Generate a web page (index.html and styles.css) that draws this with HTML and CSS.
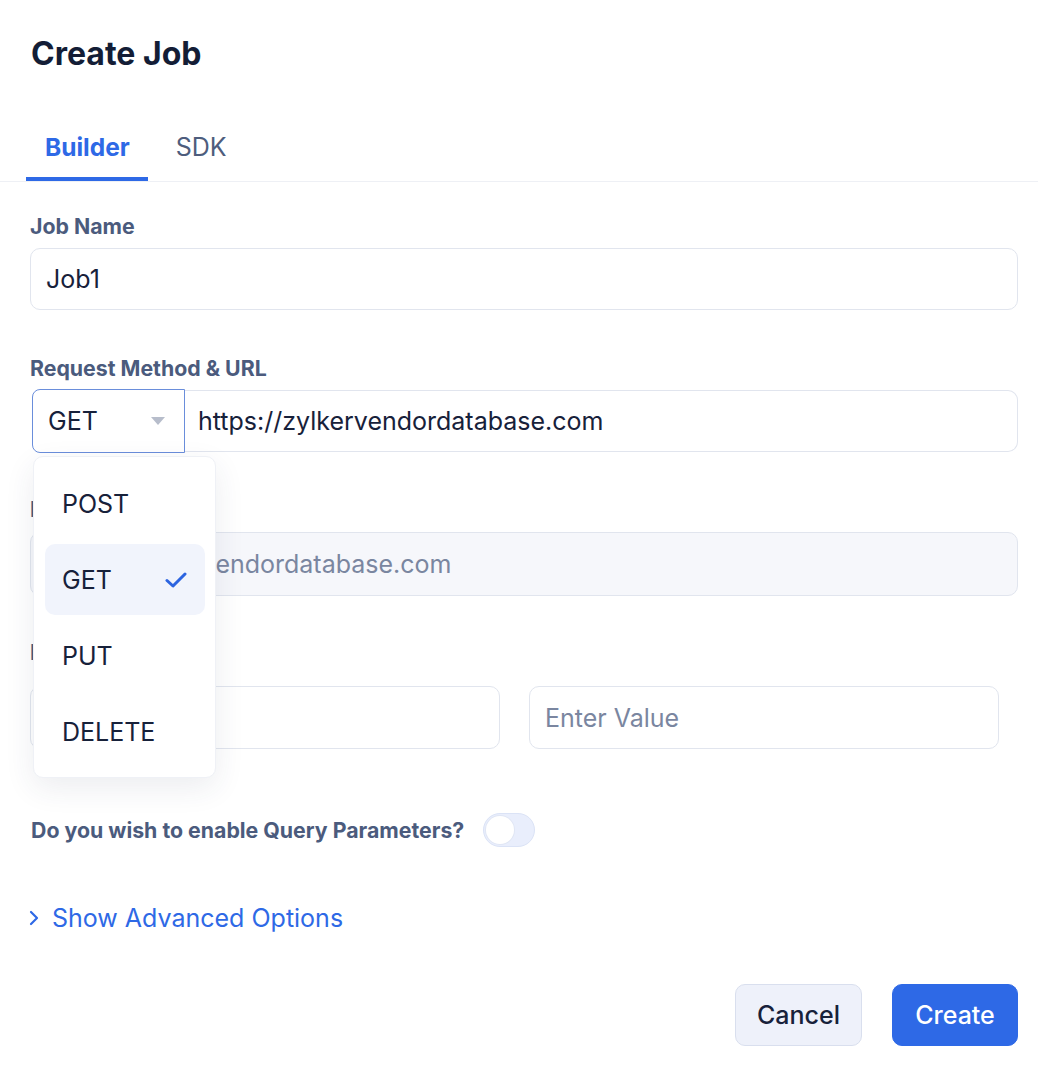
FILE: index.html
```html
<!DOCTYPE html>
<html lang="en">
<head>
<meta charset="utf-8">
<title>Create Job</title>
<link rel="stylesheet" href="styles.css">
</head>
<body>
<div class="modal">
  <header class="head">
    <h1 class="title">Create Job</h1>
  </header>
  <nav class="tabs">
    <div class="tab active">Builder</div>
    <div class="tab">SDK</div>
  </nav>
  <form class="form">
    <div class="field first">
      <div class="label">Job Name</div>
      <div class="input">Job1</div>
    </div>
    <div class="field method">
      <div class="label">Request Method &amp; URL</div>
      <div class="method-row">
        <div class="select">
          <span>GET</span>
          <svg class="caret" width="14" height="8" viewBox="0 0 14 8"><path d="M0 0 H14 L7 8 Z" fill="#b7bdcb"/></svg>
        </div>
        <div class="input url">https://zylkervendordatabase.com</div>
        <div class="dropdown">
          <div class="opt">POST</div>
          <div class="opt selected">GET
            <svg class="check" width="22" height="16" viewBox="0 0 22 16"><path d="M2 8.5 L8 14 L20 2" fill="none" stroke="#2c64e0" stroke-width="3" stroke-linecap="round" stroke-linejoin="round"/></svg>
          </div>
          <div class="opt">PUT</div>
          <div class="opt">DELETE</div>
        </div>
      </div>
    </div>
    <div class="field">
      <div class="label">Preview URL</div>
      <div class="input disabled">https://zylkervendordatabase.com</div>
    </div>
    <div class="field headers">
      <div class="label">Headers</div>
      <div class="kv">
        <div class="input ph">Enter Key</div>
        <div class="input ph">Enter Value</div>
      </div>
    </div>
    <div class="toggle-row">
      <span class="toggle-label">Do you wish to enable Query Parameters?</span>
      <span class="toggle"><span class="knob"></span></span>
    </div>
    <div class="advanced">
      <svg class="chev" width="10" height="16" viewBox="0 0 10 16"><path d="M2 2 L8 8 L2 14" fill="none" stroke="#2e69e6" stroke-width="2.2" stroke-linecap="round" stroke-linejoin="round"/></svg>
      <span>Show Advanced Options</span>
    </div>
    <div class="actions">
      <button type="button" class="btn cancel">Cancel</button>
      <button type="button" class="btn create">Create</button>
    </div>
  </form>
</div>
</body>
</html>
```
FILE: styles.css
```css
* { box-sizing: border-box; }
html, body { margin: 0; padding: 0; background: #ffffff; }
body {
  font-family: Inter, "Noto Sans", "Liberation Sans", sans-serif;
  color: #17213a;
  width: 1038px;
}
.modal { width: 1038px; }
.head { padding: 34px 30px 0 31px; }
.title {
  margin: 0;
  font-size: 32px;
  line-height: 40px;
  font-weight: 700;
  color: #131d36;
}
.tabs {
  display: flex;
  gap: 9px;
  margin-top: 57px;
  padding-left: 26px;
  border-bottom: 1px solid #eef0f5;
}
.tab {
  font-size: 25px;
  line-height: 32px;
  padding: 0 18px 14px 19px;
  border-bottom: 4px solid transparent;
  color: #4e5d7d;
  font-weight: 400;
}
.tab.active {
  font-size: 24.5px;
  color: #2e69e6;
  font-weight: 700;
  border-bottom-color: #2e69e6;
}
.form { padding: 0 20px 0 30px; }
.field { margin-top: 42px; }
.field.first { margin-top: 30px; }
.field.method { margin-top: 44px; }
.label {
  font-size: 21.3px;
  line-height: 28px;
  font-weight: 700;
  color: #4b5b7d;
  margin-bottom: 9px;
}
.field.first .label { margin-bottom: 8px; }
.field.method .label { margin-bottom: 7px; }
.field.headers .label { margin-bottom: 20px; }
.input {
  height: 62px;
  border: 1px solid #e1e5ee;
  border-radius: 10px;
  padding: 0 15px;
  display: flex;
  align-items: center;
  font-size: 25px;
  color: #17213a;
  background: #ffffff;
}
.input.disabled {
  height: 64px;
  background: #f6f7fb;
  color: #7a86a0;
}
.input.ph { color: #7a86a0; height: 63px; }
.method-row {
  position: relative;
  display: flex;
  align-items: center;
  height: 64px;
}
.select {
  width: 153px;
  height: 64px;
  margin-left: 2px;
  border: 1px solid #6a8edb;
  border-radius: 8px 0 0 8px;
  display: flex;
  align-items: center;
  justify-content: space-between;
  padding: 0 19px 0 15px;
  font-size: 25px;
}
.caret { display: block; }
.url {
  flex: 1;
  border-left: none;
  border-radius: 0 10px 10px 0;
  padding-left: 13px;
}
.dropdown {
  position: absolute;
  left: 3px;
  top: 67px;
  width: 183px;
  padding: 11px 10px 10px 11px;
  background: #ffffff;
  border: 1px solid #eff1f6;
  border-radius: 10px;
  box-shadow: 0 10px 30px rgba(40, 52, 90, 0.09);
  display: flex;
  flex-direction: column;
  gap: 5px;
  z-index: 5;
}
.opt {
  height: 71px;
  display: flex;
  align-items: center;
  justify-content: space-between;
  padding: 0 18px 0 17px;
  font-size: 25px;
  color: #17213a;
  border-radius: 10px;
}
.opt.selected { background: #f1f4fc; }
.check { display: block; }
.kv {
  display: grid;
  grid-template-columns: 470px 470px;
  column-gap: 29px;
}
.toggle-row {
  margin-top: 64px;
  display: flex;
  align-items: center;
  gap: 19px;
  height: 34px;
}
.toggle-label {
  font-size: 21.3px;
  font-weight: 700;
  color: #4b5b7d;
  margin-left: 1px;
}
.toggle {
  width: 52px;
  height: 34px;
  border-radius: 17px;
  background: #e9eefc;
  border: 1px solid #dbe3f6;
  position: relative;
  display: inline-block;
}
.knob {
  position: absolute;
  left: 2px;
  top: 2px;
  width: 28px;
  height: 28px;
  border-radius: 50%;
  background: #ffffff;
  box-shadow: 0 0 0 1px #e0e6f4;
}
.advanced {
  margin-top: 55px;
  display: flex;
  align-items: center;
  gap: 13px;
  font-size: 25px;
  line-height: 32px;
  color: #2e69e6;
  margin-left: -1px;
}
.chev { display: block; }
.actions {
  margin-top: 50px;
  display: flex;
  justify-content: flex-end;
  gap: 30px;
}
.btn {
  height: 62px;
  border-radius: 10px;
  font-family: inherit;
  font-size: 25px;
  font-weight: 500;
  padding: 0;
  cursor: pointer;
}
.cancel {
  width: 127px;
  background: #eef1fa;
  border: 1px solid #d9dfee;
  color: #17213a;
}
.create {
  width: 126px;
  background: #2e69e6;
  border: 1px solid #2e69e6;
  color: #ffffff;
}
```
